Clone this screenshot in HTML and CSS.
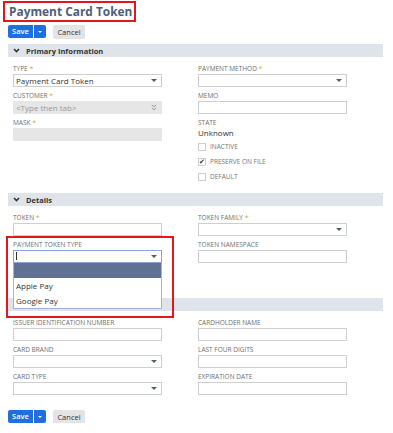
FILE: index.html
```html
<!DOCTYPE html>
<html>
<head>
    <title>Payment Card Token</title>
    <link rel="stylesheet" href="styles.css">
</head>
<body>
<div class="page">
    <h1 class="title"><span class="title-box">Payment Card Token</span></h1>

    <div class="actions">
        <span class="btn-save"><span class="save-label">Save</span><span class="save-menu"><span class="caret"></span></span></span>
        <button class="btn-cancel">Cancel</button>
    </div>

    <!-- Primary Information -->
    <section class="group">
        <div class="group-bar">
            <svg class="chev" width="7" height="5" viewBox="0 0 7 5"><path d="M1 1 L3.5 3.6 L6 1" fill="none" stroke="#333" stroke-width="1.6"/></svg>
            Primary Information
        </div>
        <div class="group-body">
            <div class="col">
                <div class="field">
                    <label>Type <span class="req">*</span></label>
                    <div class="input select">Payment Card Token<span class="arrow"></span></div>
                </div>
                <div class="field">
                    <label>Customer <span class="req">*</span></label>
                    <div class="input disabled hint">&lt;Type then tab&gt;
                        <svg class="dbl" width="6" height="7" viewBox="0 0 6 7"><path d="M0.8 0.8 L3 2.8 L5.2 0.8 M0.8 3.8 L3 5.8 L5.2 3.8" fill="none" stroke="#9a9a9a" stroke-width="1"/></svg>
                    </div>
                </div>
                <div class="field">
                    <label>Mask <span class="req">*</span></label>
                    <div class="input disabled"></div>
                </div>
            </div>
            <div class="col">
                <div class="field">
                    <label>Payment Method <span class="req">*</span></label>
                    <div class="input select"><span class="arrow"></span></div>
                </div>
                <div class="field">
                    <label>Memo</label>
                    <div class="input"></div>
                </div>
                <div class="state">
                    <label>State</label>
                    <div class="value">Unknown</div>
                </div>
                <div class="check"><span class="box"></span>Inactive</div>
                <div class="check"><span class="box checked">&#10004;</span>Preserve on file</div>
                <div class="check"><span class="box"></span>Default</div>
            </div>
        </div>
    </section>

    <!-- Details -->
    <section class="group">
        <div class="group-bar">
            <svg class="chev" width="7" height="5" viewBox="0 0 7 5"><path d="M1 1 L3.5 3.6 L6 1" fill="none" stroke="#333" stroke-width="1.6"/></svg>
            Details
        </div>
        <div class="group-body details">
            <div class="col">
                <div class="field">
                    <label>Token <span class="req">*</span></label>
                    <div class="input"></div>
                </div>
                <div class="field open">
                    <label>Payment Token Type</label>
                    <div class="input select focus"><span class="cursor"></span><span class="arrow"></span></div>
                    <ul class="dropdown">
                        <li class="active"></li>
                        <li>Apple Pay</li>
                        <li>Google Pay</li>
                    </ul>
                    <div class="callout"></div>
                </div>
            </div>
            <div class="col">
                <div class="field">
                    <label>Token Family <span class="req">*</span></label>
                    <div class="input select"><span class="arrow"></span></div>
                </div>
                <div class="field">
                    <label>Token Namespace</label>
                    <div class="input"></div>
                </div>
            </div>
        </div>
    </section>

    <!-- Card details, header is hidden under the dropdown -->
    <section class="group">
        <div class="group-bar"></div>
        <div class="group-body">
            <div class="col">
                <div class="field">
                    <label>Issuer Identification Number</label>
                    <div class="input"></div>
                </div>
                <div class="field">
                    <label>Card Brand</label>
                    <div class="input select"><span class="arrow"></span></div>
                </div>
                <div class="field">
                    <label>Card Type</label>
                    <div class="input select"><span class="arrow"></span></div>
                </div>
            </div>
            <div class="col">
                <div class="field">
                    <label>Cardholder Name</label>
                    <div class="input"></div>
                </div>
                <div class="field">
                    <label>Last Four Digits</label>
                    <div class="input"></div>
                </div>
                <div class="field">
                    <label>Expiration Date</label>
                    <div class="input"></div>
                </div>
            </div>
        </div>
    </section>

    <div class="actions bottom">
        <span class="btn-save"><span class="save-label">Save</span><span class="save-menu"><span class="caret"></span></span></span>
        <button class="btn-cancel">Cancel</button>
    </div>
</div>
</body>
</html>
```

FILE: styles.css
```css
body {
    margin: 0;
    padding: 0;
    background-color: #fff;
    font-family: "Open Sans", Arial, sans-serif;
    color: #333;
}

.page {
    padding: 0 10px 0 8px;
}

/* Title with the red annotation frame */
.title {
    margin: 1px 0 0 -5px;
    padding: 0;
    font-size: 11.9px;
    font-weight: bold;
    line-height: 17px;
    color: #4d5f79;
}

.title-box {
    display: inline-block;
    border: 2px solid #e3161d;
    padding: 0 2px 0 4px;
}

/* Buttons */
.actions {
    display: flex;
    gap: 7px;
    margin-top: 3px;
    height: 13px;
}

.actions.bottom {
    margin-top: 11px;
}

.btn-save {
    display: flex;
    height: 13px;
    border-radius: 2px;
    overflow: hidden;
}

.save-label {
    background-color: #1f6fde;
    color: #fff;
    font-size: 7.5px;
    line-height: 13px;
    width: 25px;
    text-align: center;
    font-weight: 600;
}

.save-menu {
    background-color: #1f6fde;
    width: 12px;
    margin-left: 1px;
    display: flex;
    align-items: center;
    justify-content: center;
}

.caret {
    width: 0;
    height: 0;
    border-left: 2.5px solid transparent;
    border-right: 2.5px solid transparent;
    border-top: 2.5px solid #fff;
}

.btn-cancel {
    height: 14px;
    width: 32px;
    padding: 0;
    border: none;
    border-radius: 2px;
    background-color: #e4e4e4;
    color: #333;
    font-family: "Open Sans", Arial, sans-serif;
    font-size: 7.5px;
    line-height: 14px;
}

/* Section groups */
.group {
    margin-top: 6px;
}

.group + .group {
    margin-top: 9px;
}

.group-bar {
    height: 13px;
    background-color: #dfe4eb;
    display: flex;
    align-items: center;
    font-size: 7.5px;
    font-weight: bold;
    color: #333;
}

.chev {
    margin: 0 6px 0 5px;
}

.group-body {
    display: flex;
    gap: 36px;
    padding: 7px 0 0 5px;
}

.group-body.details {
    padding-bottom: 22px;
}

.col {
    width: 149px;
}

.field {
    margin-bottom: 4px;
    position: relative;
}

label {
    display: block;
    height: 10px;
    line-height: 10px;
    font-size: 6.5px;
    text-transform: uppercase;
    color: #6f6f6f;
}

.req {
    color: #e8a33d;
    font-size: 7px;
}

.input {
    position: relative;
    box-sizing: border-box;
    height: 13px;
    border: 1px solid #cfcfcf;
    background-color: #fff;
    font-size: 8px;
    line-height: 11px;
    padding-left: 2px;
    color: #333;
}

.input.disabled {
    background-color: #e6e6e6;
    border-color: #e6e6e6;
}

.input.hint {
    color: #999;
}

.input.focus {
    border-color: #86a6d3;
}

.arrow {
    position: absolute;
    right: 4px;
    top: 4px;
    width: 0;
    height: 0;
    border-left: 3px solid transparent;
    border-right: 3px solid transparent;
    border-top: 3px solid #4f5d70;
}

.dbl {
    position: absolute;
    right: 4px;
    top: 2px;
}

.cursor {
    display: inline-block;
    width: 1px;
    height: 8px;
    margin-top: 1px;
    background-color: #333;
    vertical-align: top;
}

/* Open dropdown list and callout frame */
.dropdown {
    position: absolute;
    left: 0;
    top: 23px;
    width: 149px;
    box-sizing: border-box;
    margin: 0;
    padding: 0;
    list-style: none;
    background-color: #fff;
    border: 1px solid #9db6d8;
    border-top: none;
    z-index: 2;
}

.dropdown li {
    height: 15px;
    line-height: 15px;
    font-size: 8px;
    padding-left: 2px;
    color: #333;
}

.dropdown li.active {
    background-color: #5f7294;
}

.callout {
    position: absolute;
    left: -7px;
    top: -4px;
    width: 168px;
    height: 82px;
    box-sizing: border-box;
    border: 2px solid #e3161d;
    z-index: 3;
}

/* State + checkboxes */
.value {
    font-size: 8px;
    line-height: 10px;
    color: #333;
}

.state {
    margin-bottom: 1px;
}

.check {
    display: flex;
    align-items: center;
    height: 15px;
    font-size: 6.5px;
    text-transform: uppercase;
    color: #777;
}

.box {
    box-sizing: border-box;
    width: 8px;
    height: 8px;
    border: 1px solid #cfcfcf;
    margin-right: 4px;
    font-size: 7px;
    line-height: 6px;
    color: #333;
    text-align: center;
}
```
